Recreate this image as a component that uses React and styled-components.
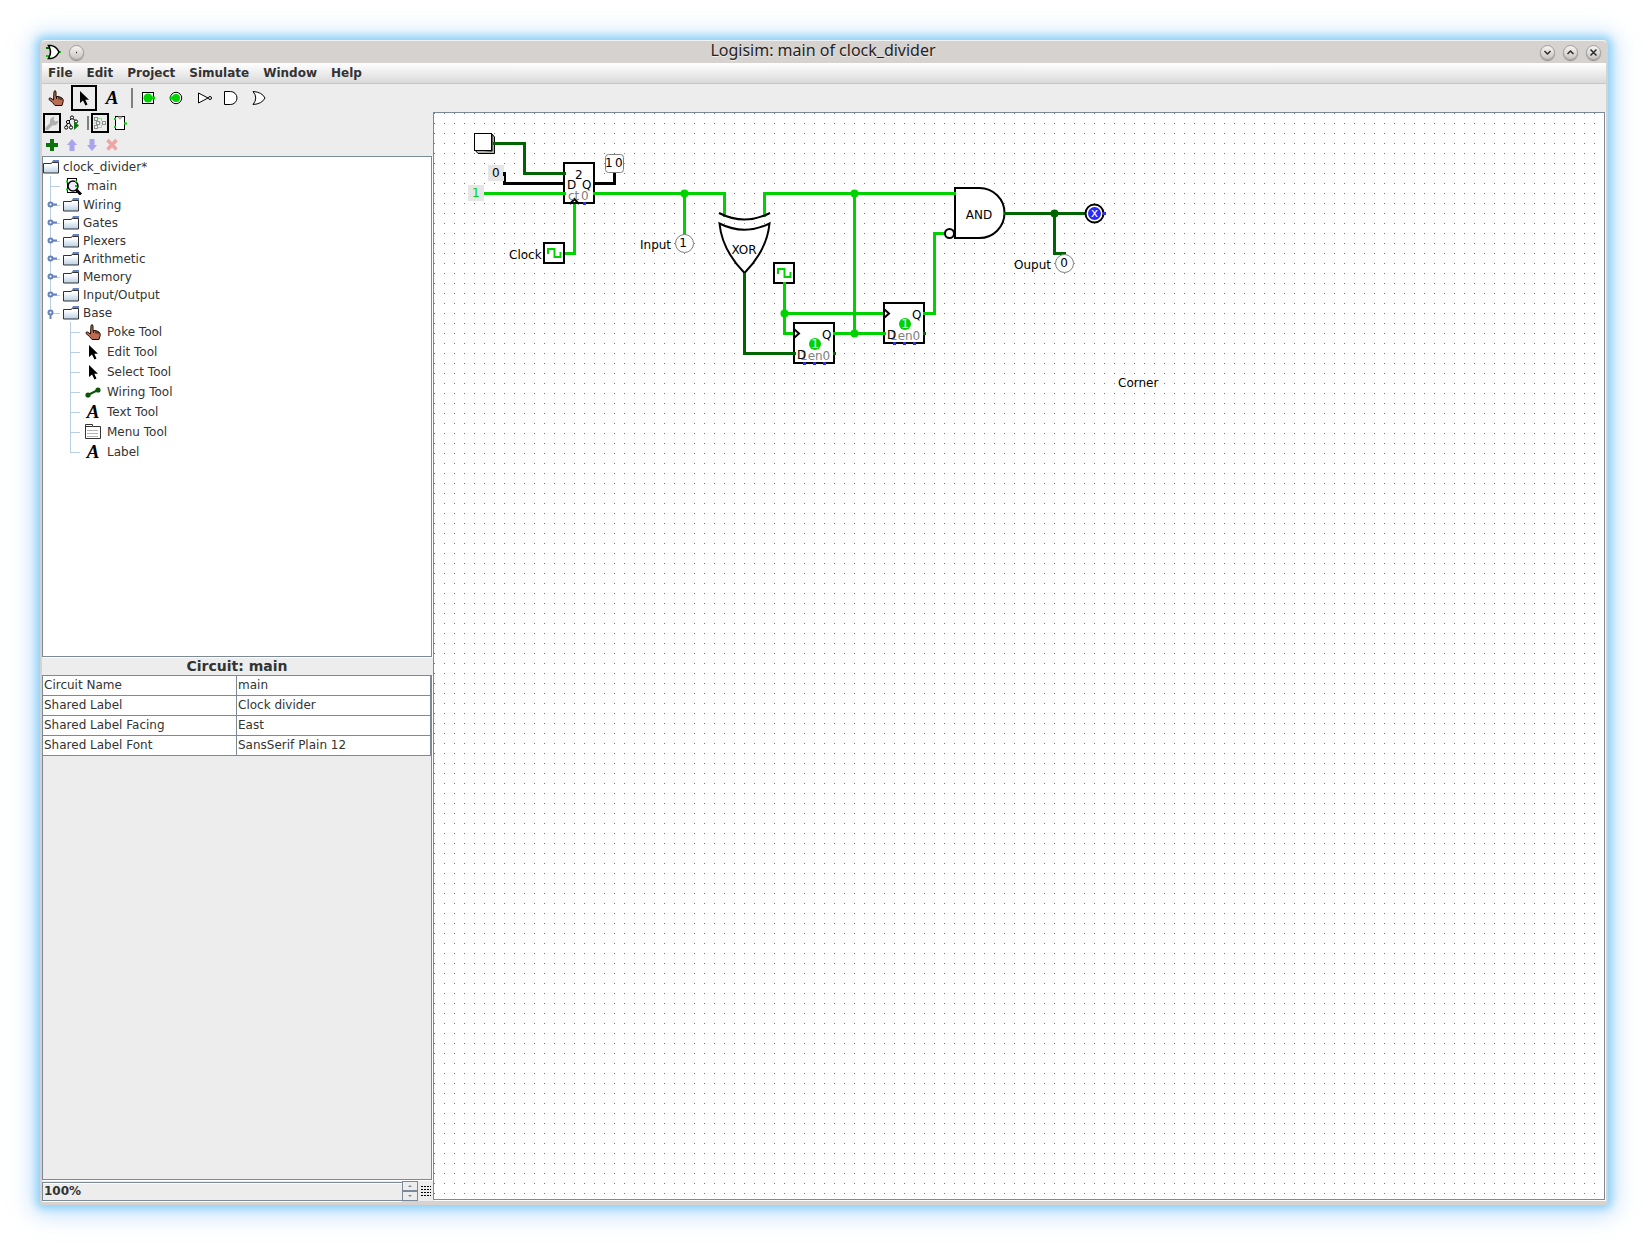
import React, { useId, useState } from "react";
import styled, { createGlobalStyle, css } from "styled-components";

const c = {
  chrome: "#d6d2cf",
  panel: "#ededed",
  line: "#7a8a99",
  guide: "#b8cfe5",
  handle: "#6382bf",
  text: "#333333",
  high: "#00d200",
  low: "#006400",
  bus: "#2828ff",
};

const GlobalStyle = createGlobalStyle`
  *, *::before, *::after { box-sizing: border-box; }
  body {
    margin: 0;
    background: #fff;
    color: ${c.text};
    font: 12px/16px "DejaVu Sans", sans-serif;
  }
  button, input { font: inherit; color: inherit; }
`;

const Desktop = styled.div`
  height: 100vh;
  padding: 40px;
  overflow: hidden;
`;

const Window = styled.div`
  height: 100%;
  display: flex;
  flex-direction: column;
  background: ${c.panel};
  border: solid ${c.chrome};
  border-width: 0 2px 4px;
  border-radius: 4px;
  box-shadow: 0 0 8px 3px #86d0f9, 0 2px 22px 8px rgba(150, 200, 250, 0.55);
`;

const TitleBar = styled.header`
  flex: none;
  height: 23px;
  display: grid;
  grid-template-columns: 1fr auto 1fr;
  align-items: center;
  padding: 0 5px 0 3px;
  background: ${c.chrome};
  border-top: 1px solid #f4f2f1;
  border-radius: 4px 4px 0 0;
`;

const Title = styled.h1`
  margin: 0;
  padding-bottom: 3px;
  color: #232323;
  font: 400 16px/19px "Noto Sans", "Open Sans", sans-serif;
  text-shadow: 0 1px 0 #f0eeec;
`;

const TitleGroup = styled.div`
  display: flex;
  align-items: center;
  gap: 8px;
  justify-content: ${(p) => (p.$end ? "flex-end" : "flex-start")};
`;

const RoundButton = styled.button`
  width: 15px;
  height: 15px;
  padding: 0;
  display: grid;
  place-items: center;
  border: 1px solid #a29e9b;
  border-radius: 50%;
  background: linear-gradient(#f6f5f4, #c9c5c2);
  box-shadow: 0 1px 1px #8f8b88;
`;

const MenuBar = styled.nav`
  flex: none;
  height: 21px;
  display: flex;
  align-items: center;
  gap: 2px;
  background: linear-gradient(#fff, #dadada);
  border-bottom: 1px solid #c6c6c6;
`;

const MenuItem = styled.button`
  border: 0;
  padding: 0 6px;
  background: none;
  font-weight: 700;
`;

const Toolbar = styled.div`
  flex: none;
  height: ${(p) => (p.$small ? 22 : 28)}px;
  display: flex;
  align-items: center;
`;

const ToolButton = styled.button`
  width: ${(p) => (p.$small ? 18 : 26)}px;
  height: ${(p) => (p.$small ? 20 : 26)}px;
  margin: 0 1px;
  padding: 0;
  display: grid;
  place-content: center;
  place-items: center;
  background: none;
  border: 2px solid ${(p) => (p.$selected ? "#000" : "transparent")};
`;

const Separator = styled.div`
  width: 2px;
  height: ${(p) => (p.$small ? 14 : 20)}px;
  margin: 0 1px 0 5px;
  background: #808080;
`;

const Workspace = styled.div`
  flex: 1;
  min-height: 0;
  display: grid;
  grid-template-columns: 391px minmax(0, 1fr);
`;

const Sidebar = styled.aside`
  min-height: 0;
  display: flex;
  flex-direction: column;
  padding-right: 1px;
`;

const sunken = css`
  border: 1px solid ${c.line};
  box-shadow: 1px 1px 0 #fff;
`;

const TreePanel = styled.div`
  ${sunken}
  flex: 500 1 0;
  min-height: 0;
  padding-top: 1px;
  overflow: hidden;
  background: #fff;
`;

const TreeRow = styled.div`
  height: ${(p) => (p.$tall ? 20 : 18)}px;
  display: flex;
  align-items: center;
  white-space: nowrap;
`;

const Guide = styled.span`
  width: 20px;
  height: 100%;
  display: flex;
  align-items: center;
  ${(p) =>
    p.$line &&
    css`
      background:
        linear-gradient(${c.guide}, ${c.guide}) 7px 0 / 1px ${p.$line === "last" ? "50%" : "100%"} no-repeat,
        linear-gradient(${c.guide}, ${c.guide}) 7px 50% / 10px 1px no-repeat;
    `}
`;

const RowIcon = styled.span`
  width: ${(p) => (p.$tall ? 20 : 16)}px;
  margin-right: 4px;
  display: flex;
  justify-content: ${(p) => (p.$tall ? "center" : "flex-start")};
`;

const SectionTitle = styled.h2`
  flex: none;
  margin: 0;
  height: 18px;
  text-align: center;
  font: 700 14px/18px "DejaVu Sans", sans-serif;
`;

const AttributePanel = styled.div`
  ${sunken}
  flex: 506 1 0;
  min-height: 0;
  overflow: hidden;
`;

const AttributeTable = styled.table`
  width: 100%;
  table-layout: fixed;
  border-collapse: separate;
  border-spacing: 0;
  background: #fff;
`;

const Cell = styled.td`
  height: 20px;
  padding: 0 1px;
  text-align: left;
  font-weight: 400;
  border: solid ${c.line};
  border-width: 0 1px 1px 0;
`;

const StatusRow = styled.div`
  flex: none;
  height: 20px;
  margin-top: 1px;
  display: flex;
  align-items: center;
`;

const ZoomField = styled.input`
  flex: 1;
  min-width: 0;
  height: 19px;
  padding: 0 1px;
  border: 1px solid ${c.line};
  border-right: 0;
  outline: 0;
  background: ${c.panel};
  box-shadow: inset 0 1px 0 #fff, 0 1px 0 #fff;
  font-weight: 700;
`;

const Stepper = styled.div`
  width: 16px;
  display: flex;
  flex-direction: column;
`;

const StepButton = styled.button`
  height: 10px;
  padding: 0;
  display: grid;
  place-items: center;
  background: ${c.panel};
  border: 1px solid ${c.line};
`;

const Grip = styled.div`
  width: 11px;
  height: 11px;
  margin: 0 1px 0 2px;
  background: conic-gradient(from 90deg at 1px 1px, transparent 270deg, #000 0) 0 0 / 3px 3px;
`;

const CanvasFrame = styled.main`
  ${sunken}
  min-width: 0;
  min-height: 0;
  margin: 0 1px 1px 0;
  background: #fff;
  overflow: hidden;
`;

const CanvasDrawing = styled.svg`
  display: block;
  width: 100%;
  height: 100%;
  font: 12px "DejaVu Sans", sans-serif;
`;

const LetterIcon = styled.span`
  color: #000;
  font: italic 700 19px/16px "Liberation Serif", serif;
`;

const Icon = ({ size = 16, children }) => (
  <svg width={size} height={size} viewBox={`0 0 ${size} ${size}`} fill="none" aria-hidden="true">
    {children}
  </svg>
);

const HandIcon = () => (
  <Icon>
    <path
      d="M6 1.500Q7.500 -.5 8 2V6.500L10 6.500 12 7 14 8Q15.500 9 15.200 11.500L14 15.500H7L4.500 12.500 1 9.500Q.8 7.500 2.500 8L5.500 10Z"
      fill="#bb6d53"
      stroke="#1c0c06"
    />
    <path d="M8.500 6v3M11 7v2.500M13 8v2" stroke="#1c0c06" />
  </Icon>
);

const ArrowIcon = () => (
  <Icon>
    <path d="M4 1V13L7 10.500 9.500 15.500 11.500 14.500 9.300 9.700H13Z" fill="#000" />
  </Icon>
);

const WireIcon = () => (
  <Icon>
    <path d="M3 11 13 6" stroke="#0a560a" strokeWidth="2" />
    <circle cx="3" cy="11" r="2.600" fill="#0a560a" />
    <circle cx="13" cy="6" r="2.600" fill="#0a560a" />
  </Icon>
);

const MenuIcon = () => (
  <Icon>
    <path d="M.5 3V.5H7.500V2.500H15.500V14.500H.5V2.500H7" stroke="#333" />
    <path d="M2 6.500H13M2 9.500H13M2 12.500H13" stroke="#b4b4b4" />
  </Icon>
);

const InputPinIcon = () => (
  <Icon>
    <rect x="2.500" y="2.500" width="11" height="11" fill="#fff" stroke="#000" />
    <circle cx="8" cy="8" r="4.500" fill={c.high} />
    <path d="M11 8H15" stroke={c.high} strokeWidth="3" />
  </Icon>
);

const OutputPinIcon = () => (
  <Icon>
    <circle cx="8" cy="8" r="5.700" fill="#fff" stroke="#000" />
    <circle cx="8" cy="8" r="4" fill={c.high} />
    <path d="M1.500 8H5" stroke={c.high} strokeWidth="3" />
  </Icon>
);

const NotIcon = () => (
  <Icon>
    <path d="M2.500 3V13L12 8Z" fill="#fff" stroke="#000" />
    <circle cx="14" cy="8" r="1.500" fill="#fff" stroke="#000" />
  </Icon>
);

const AndIcon = () => (
  <Icon>
    <path d="M.5 1.500H6.500A6.500 6.500 0 0 1 6.500 14.500H.5Z" fill="#fff" stroke="#000" />
  </Icon>
);

const OrIcon = () => (
  <Icon>
    <path d="M1 1.500Q10 2 13 8 10 14 1 14.500 6.500 8 1 1.500Z" fill="#fff" stroke="#000" />
  </Icon>
);

const AppIcon = () => (
  <Icon>
    <path d="M1 4H6M1 12H6M12 8H16" stroke={c.high} strokeWidth="2" />
    <path d="M3.500 1.500H6Q11 2 14 8 11 14 6 14.500H3.500Q7.500 8 3.500 1.500Z" fill="#fff" stroke="#000" strokeWidth="1.500" />
    <path d="M1 4H4" stroke={c.low} strokeWidth="2" />
  </Icon>
);

const WrenchIcon = () => (
  <Icon size={14}>
    <path d="M2 12.500 7 7.500" stroke="#b0b0b0" strokeWidth="3.500" strokeLinecap="round" />
    <path d="M5 8Q3.500 2 9.500 .5L8.500 3.500 10.500 5.500 13.500 4.500Q13 10 7.500 9.500Z" fill="#b0b0b0" />
  </Icon>
);

const SimulationIcon = () => (
  <Icon>
    <path d="M8 3 4 7 2 12M8 3 12 6M5 7 7 11" stroke="#000" />
    <g fill="#fff" stroke="#000">
      <circle cx="8" cy="2.500" r="1.600" />
      <circle cx="4" cy="7" r="1.600" />
      <circle cx="12" cy="6.500" r="1.600" />
      <circle cx="2.200" cy="12.500" r="1.600" />
      <circle cx="7" cy="12.500" r="1.600" />
    </g>
    <path d="M10 6V15L15 10.500Z" fill="#0b7a0b" />
  </Icon>
);

const LayoutIcon = () => (
  <Icon size={14}>
    <path d="M5 2.500H8.500V5M5 11.500H8.500V9M1 7H9" stroke="#95db95" />
    <g stroke="#8f8f8f" fill="#f2f2f2">
      <rect x="1.500" y="1.500" width="3" height="3" />
      <rect x="1.500" y="9.500" width="3" height="3" />
      <rect x="9.500" y="5.500" width="3" height="3" />
      <rect x="3.500" y="5.500" width="3" height="3" />
    </g>
  </Icon>
);

const AppearanceIcon = () => (
  <Icon>
    <rect x="3.500" y="1.500" width="9" height="13" fill="#fff" stroke="#000" />
    <path d="M6 2Q8 6 10 2Z" fill="#ddd" stroke="#999" />
    <path d="M2 4H4M2 12H4M12 8.500H15" stroke={c.high} strokeWidth="2" />
  </Icon>
);

const CircuitIcon = () => (
  <Icon size={17}>
    <rect x="2.500" y=".5" width="9" height="14" fill="#fff" stroke="#000" />
    <circle cx="8" cy="8" r="5" fill="#eef" stroke="#000" strokeWidth="1.500" />
    <path d="M11.500 12 16 16.500" stroke="#000" strokeWidth="3" />
    <path d="M1 3.500H3M1 11.500H3M10 3.500H12M10 8H12" stroke={c.high} strokeWidth="2" />
  </Icon>
);

const PlusIcon = () => (
  <Icon>
    <path d="M8 2V14M2 8H14" stroke="#0c730c" strokeWidth="4" />
  </Icon>
);
const UpIcon = () => (
  <Icon>
    <path d="M8 2 13 8H10.500V14H5.500V8H3Z" fill="#a9a5ec" />
  </Icon>
);
const DownIcon = () => (
  <Icon>
    <path d="M8 14 3 8H5.500V2H10.500V8H13Z" fill="#a9a5ec" />
  </Icon>
);
const DeleteIcon = () => (
  <Icon>
    <path d="M3.500 3 12.500 12.500M12.500 3 3.500 12.500" stroke="#eda5a5" strokeWidth="3.500" />
  </Icon>
);

const FolderIcon = () => {
  const id = useId();
  return (
    <Icon>
      <defs>
        <linearGradient id={id} x1="0" y1="0" x2="0" y2="1">
          <stop offset=".2" stopColor="#fff" />
          <stop offset="1" stopColor={c.guide} />
        </linearGradient>
      </defs>
      <path d="M8.500 4 10 1H16V4Z" fill={c.handle} />
      <path d="M.5 4.500H8L9.500 3.500H15.500V14H.5Z" fill={`url(#${id})`} stroke="#333" />
    </Icon>
  );
};

const HandleIcon = ({ open }) => (
  <Icon>
    <path d={open ? "M7.500 8V14" : "M8 7.500H14"} stroke={c.handle} strokeWidth="2" />
    <circle cx="7.500" cy="7.500" r="2" fill="#fff" stroke={c.handle} strokeWidth="2" />
  </Icon>
);

const Letter = () => <LetterIcon aria-hidden="true">A</LetterIcon>;

const MENUS = ["File", "Edit", "Project", "Simulate", "Window", "Help"];
const LIBRARIES = ["Wiring", "Gates", "Plexers", "Arithmetic", "Memory", "Input/Output", "Base"];
const BASE_TOOLS = [
  ["Poke Tool", HandIcon],
  ["Edit Tool", ArrowIcon],
  ["Select Tool", ArrowIcon],
  ["Wiring Tool", WireIcon],
  ["Text Tool", Letter],
  ["Menu Tool", MenuIcon],
  ["Label", Letter],
];
const EDIT_TOOLS = [["Poke", HandIcon], ["Edit", ArrowIcon, true], ["Text", Letter]];
const PART_TOOLS = [
  ["Input pin", InputPinIcon],
  ["Output pin", OutputPinIcon],
  ["NOT gate", NotIcon],
  ["AND gate", AndIcon],
  ["OR gate", OrIcon],
];
const ATTRIBUTES = [
  ["Circuit Name", "main"],
  ["Shared Label", "Clock divider"],
  ["Shared Label Facing", "East"],
  ["Shared Label Font", "SansSerif Plain 12"],
];

const Tools = ({ items, small }) =>
  items.map(([name, Glyph, selected]) => (
    <ToolButton key={name} type="button" aria-label={name} aria-pressed={!!selected} $selected={selected} $small={small}>
      <Glyph />
    </ToolButton>
  ));

const Wire = ({ d, color = c.high }) => (
  <path d={d} transform="translate(.5 .5)" fill="none" stroke={color} strokeWidth="3" strokeLinecap="square" />
);

const Dot = ({ x, y, color = c.high, r = 4 }) => <circle cx={x + 0.5} cy={y + 0.5} r={r} fill={color} />;

const Port = ({ x, y, color }) => <rect x={x - 1} y={y - 1} width="3" height="3" fill={color} />;

const Clock = ({ x, y }) => (
  <g transform={`translate(${x} ${y})`}>
    <rect width="20" height="20" fill="#fff" stroke="#000" strokeWidth="2" />
    <path d="M4 11V6H10.500V14H16.500V9" fill="none" stroke={c.high} strokeWidth="2" />
  </g>
);

const FlipFlop = ({ x, y }) => (
  <g transform={`translate(${x} ${y})`}>
    <rect width="40" height="40" fill="#fff" stroke="#000" strokeWidth="2" />
    <path d="M0 6 5 10.500 0 15" fill="none" stroke="#000" strokeWidth="2" />
    <circle cx="21" cy="21" r="6" fill={c.high} />
    <text x="21" y="25" fill="#fff" textAnchor="middle">1</text>
    <text x="6" y="37" fill="#808080">1en0</text>
    <text x="3" y="36">D</text>
    <text x="28" y="16">Q</text>
    <Port x={40} y={10} color={c.high} />
    <Port x={40} y={30} color={c.low} />
    <Port x={10} y={40} color={c.bus} />
    <Port x={20} y={40} color={c.bus} />
    <Port x={30} y={40} color={c.bus} />
  </g>
);

const Circuit = () => (
  <CanvasDrawing role="img" aria-label="Circuit main">
    <defs>
      <pattern id="grid" width="10" height="10" patternUnits="userSpaceOnUse">
        <rect width="1" height="1" fill="#777" />
      </pattern>
    </defs>
    <rect width="100%" height="100%" fill="url(#grid)" />

    <Wire d="M60 30H90V60H130" color={c.low} />
    <Wire d="M70 60V70H130M160 70H180V60" color="#000" />
    <Wire d="M50 80H130M160 80H290V102M250 80V121M140 90V140H130" />
    <Wire d="M330 102V80H520M420 80V220" />
    <Wire d="M310 160V240H360" color={c.low} />
    <Wire d="M350 170V220H360M350 200H450M400 220H450M490 200H500V120H509" />
    <Wire d="M570 100H651M620 100V140H630" color={c.low} />
    <Dot x={250} y={80} />
    <Dot x={420} y={80} />
    <Dot x={350} y={200} />
    <Dot x={420} y={220} />
    <Dot x={620} y={100} color={c.low} />

    <path d="M41 37 44 40.500H60.500V24L58 21V38Z" fill="#b0b0a8" stroke="#000" />
    <rect x="40.500" y="20.500" width="17" height="17" fill="#fff" stroke="#000" />
    <Port x={60} y={30} color={c.low} />

    <rect x="54" y="52" width="16" height="16" fill="#e6e6e6" />
    <text x="58" y="64">0</text>
    <rect x="34" y="72" width="16" height="16" fill="#e6e6e6" />
    <text x="38" y="84" fill={c.high}>1</text>
    <path d="M70.500 59V63" stroke="#000" strokeWidth="3" />

    <rect x="130" y="50" width="30" height="40" fill="#fff" stroke="#000" strokeWidth="2" />
    <Port x={130} y={60} color={c.low} />
    <Port x={130} y={80} color={c.high} />
    <Port x={160} y={80} color={c.high} />
    <path d="M136 91 140.500 86 145 91" fill="none" stroke="#000" strokeWidth="2" />
    <text x="141" y="66">2</text>
    <text x="133" y="76">D</text>
    <text x="148" y="76">Q</text>
    <g fill="#808080">
      <text x="134" y="87">ct</text>
      <text x="147" y="87">0</text>
    </g>
    <Port x={150} y={90} color={c.bus} />

    <rect x="171.500" y="41.500" width="18" height="18" rx="3" fill="#fff" stroke="#808080" />
    <text x="171" y="54">1</text>
    <text x="181" y="54">0</text>

    <Clock x={110} y={130} />
    <text x="75" y="146">Clock</text>

    <circle cx="250.500" cy="130.500" r="9" fill="#fff" stroke="#808080" />
    <text x="249" y="134" textAnchor="middle">1</text>
    <text x="206" y="136">Input</text>

    <g fill="none" stroke="#000" strokeWidth="2">
      <path d="M285 100Q310.500 113 336 100" />
      <path d="M285.500 110.500Q310.500 123 335.500 110.500 333 137 310.500 160 288 137 285.500 110.500Z" fill="#fff" />
    </g>
    <text x="310" y="141" textAnchor="middle">XOR</text>
    <Port x={310} y={161} color={c.low} />

    <Clock x={340} y={150} />
    <Port x={350} y={170} color={c.high} />
    <FlipFlop x={360} y={210} />
    <FlipFlop x={450} y={190} />
    <Port x={360} y={240} color={c.low} />
    <Port x={450} y={220} color={c.high} />

    <path d="M521 75H545.500A25 25 0 0 1 545.500 125H521Z" fill="#fff" stroke="#000" strokeWidth="2" />
    <Port x={520} y={80} color={c.high} />
    <Port x={571} y={100} color={c.low} />
    <circle cx="515.500" cy="120.500" r="4.500" fill="#fff" stroke="#000" strokeWidth="2" />
    <text x="545" y="106" textAnchor="middle">AND</text>

    <circle cx="660.500" cy="100.500" r="9" fill="#fff" stroke="#000" strokeWidth="2" />
    <circle cx="660.500" cy="100.500" r="6.500" fill={c.bus} />
    <text x="660.500" y="104" fill="#fff" textAnchor="middle">x</text>
    <Port x={670} y={100} color={c.bus} />

    <circle cx="630.500" cy="150.500" r="9" fill="#fff" stroke="#808080" />
    <text x="630" y="154" textAnchor="middle">0</text>
    <text x="580" y="156">Ouput</text>
    <text x="684" y="274">Corner</text>
  </CanvasDrawing>
);

const ControlGlyph = ({ d }) => (
  <svg width="9" height="9" viewBox="0 0 9 9" fill="none" stroke="#2c2c2c" strokeWidth="1.500" aria-hidden="true">
    <path d={d} />
  </svg>
);

export default function App() {
  const [zoom, setZoom] = useState("100%");
  return (
    <>
      <GlobalStyle />
      <Desktop>
        <Window>
          <TitleBar>
            <TitleGroup>
              <AppIcon />
              <RoundButton type="button" aria-label="Keep on all desktops">
                <ControlGlyph d="M4 4.500H5" />
              </RoundButton>
            </TitleGroup>
            <Title>Logisim: main of clock_divider</Title>
            <TitleGroup $end>
              <RoundButton type="button" aria-label="Minimize"><ControlGlyph d="M1.500 3 4.500 6 7.500 3" /></RoundButton>
              <RoundButton type="button" aria-label="Maximize"><ControlGlyph d="M1.500 6 4.500 3 7.500 6" /></RoundButton>
              <RoundButton type="button" aria-label="Close"><ControlGlyph d="M1.500 1.500 7.500 7.500M7.500 1.500 1.500 7.500" /></RoundButton>
            </TitleGroup>
          </TitleBar>
          <MenuBar>
            {MENUS.map((m) => <MenuItem key={m} type="button">{m}</MenuItem>)}
          </MenuBar>
          <Toolbar>
            <Tools items={EDIT_TOOLS} />
            <Separator />
            <Tools items={PART_TOOLS} />
          </Toolbar>
          <Workspace>
            <Sidebar>
              <Toolbar $small>
                <Tools small items={[["Toolbox", WrenchIcon, true], ["Simulation tree", SimulationIcon]]} />
                <Separator $small />
                <Tools small items={[["Edit layout", LayoutIcon, true], ["Edit appearance", AppearanceIcon]]} />
              </Toolbar>
              <Toolbar $small>
                <Tools
                  small
                  items={[
                    ["Add circuit", PlusIcon],
                    ["Move up", UpIcon],
                    ["Move down", DownIcon],
                    ["Remove circuit", DeleteIcon],
                  ]}
                />
              </Toolbar>
              <TreePanel>
                <TreeRow><RowIcon><FolderIcon /></RowIcon>clock_divider*</TreeRow>
                <TreeRow $tall>
                  <Guide $line="mid" />
                  <RowIcon $tall><CircuitIcon /></RowIcon>main
                </TreeRow>
                {LIBRARIES.map((name) => (
                  <TreeRow key={name}>
                    <Guide $line={name === "Base" ? "last" : "mid"}><HandleIcon open={name === "Base"} /></Guide>
                    <RowIcon><FolderIcon /></RowIcon>{name}
                  </TreeRow>
                ))}
                {BASE_TOOLS.map(([name, Glyph]) => (
                  <TreeRow key={name} $tall>
                    <Guide />
                    <Guide $line={name === "Label" ? "last" : "mid"} />
                    <RowIcon $tall><Glyph /></RowIcon>{name}
                  </TreeRow>
                ))}
              </TreePanel>
              <SectionTitle>Circuit: main</SectionTitle>
              <AttributePanel>
                <AttributeTable>
                  <tbody>
                    {ATTRIBUTES.map(([k, v]) => (
                      <tr key={k}>
                        <Cell as="th" scope="row">{k}</Cell>
                        <Cell>{v}</Cell>
                      </tr>
                    ))}
                  </tbody>
                </AttributeTable>
              </AttributePanel>
              <StatusRow>
                <ZoomField aria-label="Zoom" value={zoom} onChange={(e) => setZoom(e.target.value)} />
                <Stepper>
                  <StepButton type="button" aria-label="Zoom in">
                    <svg width="4" height="2" aria-hidden="true"><path d="M0 2 2 0 4 2Z" fill={c.line} /></svg>
                  </StepButton>
                  <StepButton type="button" aria-label="Zoom out">
                    <svg width="4" height="2" aria-hidden="true"><path d="M0 0 2 2 4 0Z" fill={c.line} /></svg>
                  </StepButton>
                </Stepper>
                <Grip />
              </StatusRow>
            </Sidebar>
            <CanvasFrame>
              <Circuit />
            </CanvasFrame>
          </Workspace>
        </Window>
      </Desktop>
    </>
  );
}
